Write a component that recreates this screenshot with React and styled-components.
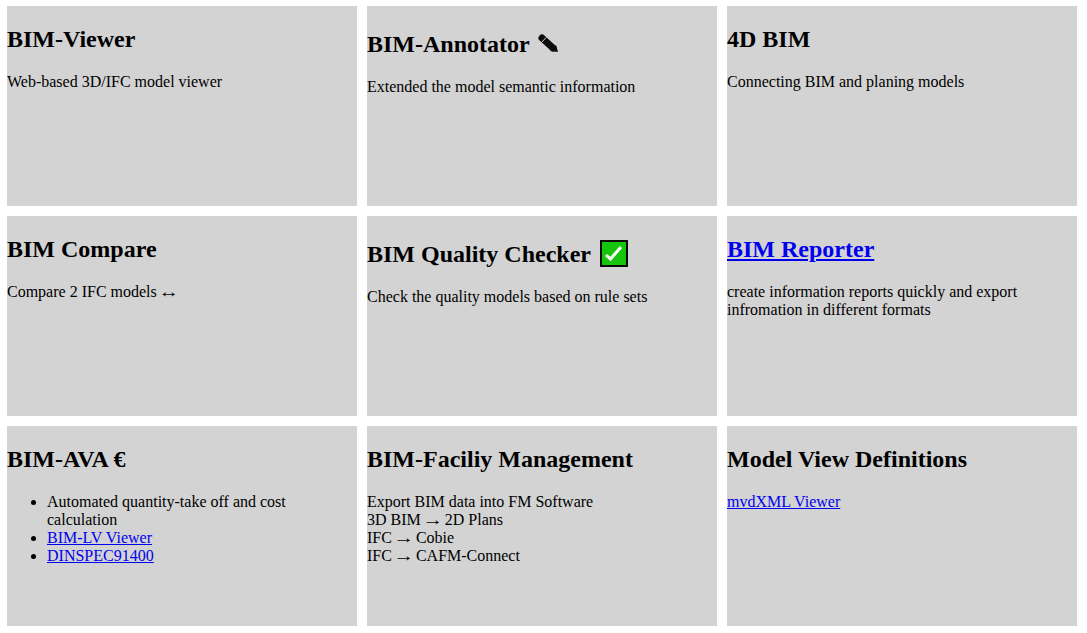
import React from "react";
import styled, { createGlobalStyle } from "styled-components";

const Global = createGlobalStyle`
  html, body { margin: 0; padding: 0; background: #fff; }
  body { font-family: "Liberation Serif", "Times New Roman", serif; font-size: 16px; color: #000; }
`;

const Grid = styled.div`
  display: grid;
  grid-template-columns: repeat(3, 350px);
  grid-auto-rows: 200px;
  gap: 10px;
  padding: 6px 10px 7px 7px;
`;

const Card = styled.section`
  background: lightgray;
  overflow: hidden;
  display: flow-root;
`;

const Title = styled.h2`
  font-size: 24px;
  font-weight: bold;
  margin: 19.92px 0;
  padding-top: ${(p) => p.$shift || 0}px;
`;

const Text = styled.p`
  margin: 16px 0;
  line-height: 18px;
`;

const Bullets = styled.ul`
  margin: 16px 0;
  padding-left: 40px;
  line-height: 18px;
`;

const Link = styled.a`
  color: #0000ee;
  text-decoration: underline;
`;

const Emoji = styled.svg`
  vertical-align: ${(p) => p.$drop}px;
  margin-left: ${(p) => p.$gap}px;
`;

const Arrow = styled.span`
  display: inline-block;
  transform: scaleX(1.3);
`;

const Pencil = () => (
  <Emoji $drop={-1} $gap={2} width="22" height="20" viewBox="0 0 22 20">
    <path d="M5 5 L16 15" stroke="#0c0c0c" strokeWidth="7" strokeLinecap="round" />
    <path d="M13 18 L19 12 L21 19 Z" fill="#0c0c0c" />
    <path d="M5 9 L9 4.5" stroke="#d3d3d3" strokeWidth="1" />
  </Emoji>
);

const Check = () => (
  <Emoji $drop={-5} $gap={3} width="28" height="27" viewBox="0 0 28 27">
    <rect x="1" y="1" width="26" height="25" fill="#16c60c" stroke="#0a0a0a" strokeWidth="2" />
    <path d="M6 15 L10.5 19 L21 7" fill="none" stroke="#fff" strokeWidth="3" />
  </Emoji>
);

const Flow = ({ from, to }) => (
  <>
    {from}
    {" "}
    <Arrow>→</Arrow>
    {" "}
    {to}
  </>
);

export default function App() {
  return (
    <>
      <Global />
      <Grid>
        <Card><Title>BIM-Viewer</Title><Text>Web-based 3D/IFC model viewer</Text></Card>
        <Card><Title $shift={5}>BIM-Annotator <Pencil /></Title><Text>Extended the model semantic information</Text></Card>
        <Card><Title>4D BIM</Title><Text>Connecting BIM and planing models</Text></Card>
        <Card><Title>BIM Compare</Title><Text>{"Compare 2 IFC models"}{" "}<Arrow>↔</Arrow></Text></Card>
        <Card><Title $shift={4}>BIM Quality Checker <Check /></Title><Text>Check the quality models based on rule sets</Text></Card>
        <Card><Title><Link href="#">BIM Reporter</Link></Title><Text>create information reports quickly and export infromation in different formats</Text></Card>
        <Card>
          <Title>BIM-AVA €</Title>
          <Bullets>
            <li>Automated quantity-take off and cost calculation</li>
            <li><Link href="#">BIM-LV Viewer</Link></li>
            <li><Link href="#">DINSPEC91400</Link></li>
          </Bullets>
        </Card>
        <Card>
          <Title>BIM-Faciliy Management</Title>
          <Text>
            Export BIM data into FM Software<br />
            <Flow from="3D BIM" to="2D Plans" /><br />
            <Flow from="IFC" to="Cobie" /><br />
            <Flow from="IFC" to="CAFM-Connect" />
          </Text>
        </Card>
        <Card><Title>Model View Definitions</Title><Text><Link href="#">mvdXML Viewer</Link></Text></Card>
      </Grid>
    </>
  );
}
